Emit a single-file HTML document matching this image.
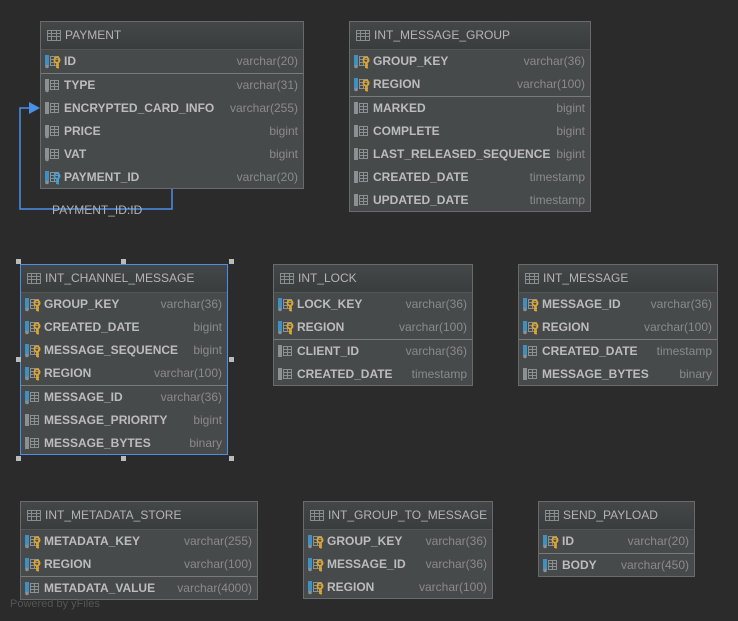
<!DOCTYPE html>
<html><head><meta charset="utf-8"><style>
body{margin:0;width:738px;height:621px;background:#2b2b2b;position:relative;overflow:hidden;font-family:"Liberation Sans","DejaVu Sans",sans-serif}
.t{position:absolute;background:#474a4b;border:1px solid #686a6b;box-sizing:border-box}
.h{height:27px;line-height:27px;background:linear-gradient(#444748,#3a3d3e);border-bottom:1px solid #555;color:#b4b4b4;font-size:12px;padding-left:24px;position:relative}
.h svg{position:absolute;left:6px;top:8px}
.r{height:23px;line-height:23px;position:relative;font-size:12px;font-weight:bold;color:#bcbcbc;padding-left:23px}
.r svg{position:absolute;left:4px;top:4px}
.r span{position:absolute;right:5px;top:0;font-weight:normal;color:#8a8a8a}
.s{border-top:1px solid #7a7a7a}
.hd{position:absolute;width:5px;height:5px;background:#bbb}
</style></head><body>
<svg width="0" height="0" style="position:absolute"><defs>
<g id="tbl"><rect x="0.5" y="0.5" width="13" height="10" fill="none" stroke="#8a8d8f"/><path d="M0 3.5H14M0 6.5H14M4.5 0V11M9.5 0V11" stroke="#8a8d8f"/></g>
<g id="col"><rect x="0" y="1" width="4" height="12" fill="#8c9092"/><rect x="5.5" y="2.5" width="8" height="9" fill="none" stroke="#8c9092"/><path d="M5.5 5.5H13.5M5.5 8.5H13.5M9.5 2.5V11.5" stroke="#8c9092"/></g>
<g id="coln"><rect x="0" y="1" width="4" height="11" fill="#8c9092"/><circle cx="2" cy="12.5" r="1.8" fill="#8c9092"/><rect x="5.5" y="2.5" width="8" height="9" fill="none" stroke="#8c9092"/><path d="M5.5 5.5H13.5M5.5 8.5H13.5M9.5 2.5V11.5" stroke="#8c9092"/></g>
<g id="colb"><rect x="0" y="1" width="4" height="11" fill="#3f8fbf"/><circle cx="2" cy="12.5" r="1.8" fill="#8c9092"/><rect x="5.5" y="2.5" width="8" height="9" fill="none" stroke="#8c9092"/><path d="M5.5 5.5H13.5M5.5 8.5H13.5M9.5 2.5V11.5" stroke="#8c9092"/></g>
<g id="pk"><use href="#colb"/><circle cx="12" cy="6" r="2.6" fill="none" stroke="#e0a526" stroke-width="1.8"/><path d="M12 8.5V14M12 11.5H14M12 13.5H14" stroke="#e0a526" stroke-width="1.8"/></g>
<g id="fk"><use href="#colb"/><circle cx="12" cy="6" r="2.6" fill="none" stroke="#3ba3d8" stroke-width="1.8"/><path d="M12 8.5V14M12 11.5H14M12 13.5H14" stroke="#3ba3d8" stroke-width="1.8"/></g>
</defs></svg>

<svg style="position:absolute;left:0;top:0" width="738" height="621"><path d="M172 188V209H20V108H32" fill="none" stroke="#4a8fe8" stroke-width="1.5"/><path d="M29 102L40 108L29 114Z" fill="#4a8fe8"/></svg>
<div style="position:absolute;left:52px;top:203px;font-size:12px;color:#b0b0b0">PAYMENT_ID:ID</div>

<div class="t" style="left:40px;top:21px;width:264px;height:168px">
<div class="h"><svg width="14" height="11"><use href="#tbl"/></svg>PAYMENT</div>
<div class="r"><svg width="16" height="15"><use href="#pk"/></svg>ID<span>varchar(20)</span></div>
<div class="r s"><svg width="16" height="15"><use href="#coln"/></svg>TYPE<span>varchar(31)</span></div>
<div class="r"><svg width="16" height="15"><use href="#col"/></svg>ENCRYPTED_CARD_INFO<span>varchar(255)</span></div>
<div class="r"><svg width="16" height="15"><use href="#coln"/></svg>PRICE<span>bigint</span></div>
<div class="r"><svg width="16" height="15"><use href="#coln"/></svg>VAT<span>bigint</span></div>
<div class="r"><svg width="16" height="15"><use href="#fk"/></svg>PAYMENT_ID<span>varchar(20)</span></div>
</div>

<div class="t" style="left:349px;top:21px;width:242px;height:191px">
<div class="h"><svg width="14" height="11"><use href="#tbl"/></svg>INT_MESSAGE_GROUP</div>
<div class="r"><svg width="16" height="15"><use href="#pk"/></svg>GROUP_KEY<span>varchar(36)</span></div>
<div class="r"><svg width="16" height="15"><use href="#pk"/></svg>REGION<span>varchar(100)</span></div>
<div class="r s"><svg width="16" height="15"><use href="#col"/></svg>MARKED<span>bigint</span></div>
<div class="r"><svg width="16" height="15"><use href="#col"/></svg>COMPLETE<span>bigint</span></div>
<div class="r"><svg width="16" height="15"><use href="#col"/></svg>LAST_RELEASED_SEQUENCE<span>bigint</span></div>
<div class="r"><svg width="16" height="15"><use href="#col"/></svg>CREATED_DATE<span>timestamp</span></div>
<div class="r"><svg width="16" height="15"><use href="#col"/></svg>UPDATED_DATE<span>timestamp</span></div>
</div>

<div class="t" style="left:20px;top:264px;width:208px;height:191px;border-color:#4a8fe8">
<div class="h"><svg width="14" height="11"><use href="#tbl"/></svg>INT_CHANNEL_MESSAGE</div>
<div class="r"><svg width="16" height="15"><use href="#pk"/></svg>GROUP_KEY<span>varchar(36)</span></div>
<div class="r"><svg width="16" height="15"><use href="#pk"/></svg>CREATED_DATE<span>bigint</span></div>
<div class="r"><svg width="16" height="15"><use href="#pk"/></svg>MESSAGE_SEQUENCE<span>bigint</span></div>
<div class="r"><svg width="16" height="15"><use href="#pk"/></svg>REGION<span>varchar(100)</span></div>
<div class="r s"><svg width="16" height="15"><use href="#colb"/></svg>MESSAGE_ID<span>varchar(36)</span></div>
<div class="r"><svg width="16" height="15"><use href="#col"/></svg>MESSAGE_PRIORITY<span>bigint</span></div>
<div class="r"><svg width="16" height="15"><use href="#col"/></svg>MESSAGE_BYTES<span>binary</span></div>
</div>
<div class="hd" style="left:16px;top:259px"></div><div class="hd" style="left:121px;top:259px"></div><div class="hd" style="left:229px;top:259px"></div>
<div class="hd" style="left:16px;top:357px"></div><div class="hd" style="left:229px;top:357px"></div>
<div class="hd" style="left:16px;top:456px"></div><div class="hd" style="left:121px;top:456px"></div><div class="hd" style="left:229px;top:456px"></div>

<div class="t" style="left:273px;top:264px;width:200px;height:122px">
<div class="h"><svg width="14" height="11"><use href="#tbl"/></svg>INT_LOCK</div>
<div class="r"><svg width="16" height="15"><use href="#pk"/></svg>LOCK_KEY<span>varchar(36)</span></div>
<div class="r"><svg width="16" height="15"><use href="#pk"/></svg>REGION<span>varchar(100)</span></div>
<div class="r s"><svg width="16" height="15"><use href="#col"/></svg>CLIENT_ID<span>varchar(36)</span></div>
<div class="r"><svg width="16" height="15"><use href="#col"/></svg>CREATED_DATE<span>timestamp</span></div>
</div>

<div class="t" style="left:518px;top:264px;width:200px;height:122px">
<div class="h"><svg width="14" height="11"><use href="#tbl"/></svg>INT_MESSAGE</div>
<div class="r"><svg width="16" height="15"><use href="#pk"/></svg>MESSAGE_ID<span>varchar(36)</span></div>
<div class="r"><svg width="16" height="15"><use href="#pk"/></svg>REGION<span>varchar(100)</span></div>
<div class="r s"><svg width="16" height="15"><use href="#colb"/></svg>CREATED_DATE<span>timestamp</span></div>
<div class="r"><svg width="16" height="15"><use href="#col"/></svg>MESSAGE_BYTES<span>binary</span></div>
</div>

<div class="t" style="left:20px;top:501px;width:238px;height:99px">
<div class="h"><svg width="14" height="11"><use href="#tbl"/></svg>INT_METADATA_STORE</div>
<div class="r"><svg width="16" height="15"><use href="#pk"/></svg>METADATA_KEY<span>varchar(255)</span></div>
<div class="r"><svg width="16" height="15"><use href="#pk"/></svg>REGION<span>varchar(100)</span></div>
<div class="r s"><svg width="16" height="15"><use href="#colb"/></svg>METADATA_VALUE<span>varchar(4000)</span></div>
</div>

<div class="t" style="left:303px;top:501px;width:190px;height:98px">
<div class="h"><svg width="14" height="11"><use href="#tbl"/></svg>INT_GROUP_TO_MESSAGE</div>
<div class="r"><svg width="16" height="15"><use href="#pk"/></svg>GROUP_KEY<span>varchar(36)</span></div>
<div class="r"><svg width="16" height="15"><use href="#pk"/></svg>MESSAGE_ID<span>varchar(36)</span></div>
<div class="r"><svg width="16" height="15"><use href="#pk"/></svg>REGION<span>varchar(100)</span></div>
</div>

<div class="t" style="left:538px;top:501px;width:157px;height:76px">
<div class="h"><svg width="14" height="11"><use href="#tbl"/></svg>SEND_PAYLOAD</div>
<div class="r"><svg width="16" height="15"><use href="#pk"/></svg>ID<span>varchar(20)</span></div>
<div class="r s"><svg width="16" height="15"><use href="#colb"/></svg>BODY<span>varchar(450)</span></div>
</div>

<div style="position:absolute;left:10px;top:598px;font-size:11px;color:#555">Powered by yFiles</div>
</body></html>
